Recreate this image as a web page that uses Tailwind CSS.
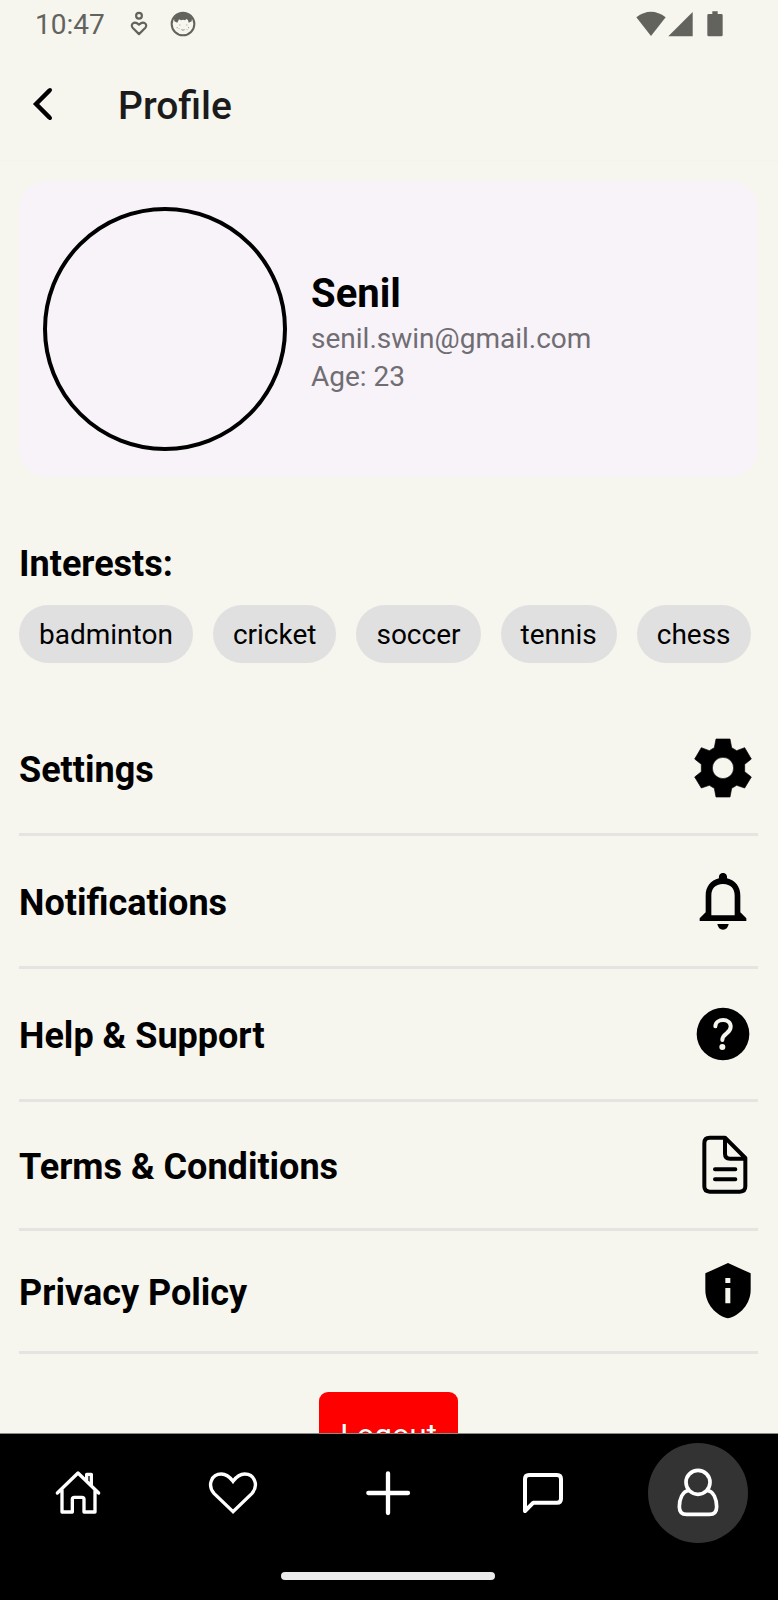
<!DOCTYPE html>
<html lang="en">
<head>
  <meta charset="UTF-8" />
  <meta name="viewport" content="width=device-width, initial-scale=1.0"/>
  <title>Profile</title>
  <script src="https://cdn.jsdelivr.net/npm/@tailwindcss/browser@4"></script>
</head>
<body class="h-screen flex flex-col overflow-hidden bg-[#f6f5ee] text-black font-['Roboto',sans-serif]">

  <!-- Status bar -->
  <div class="flex h-12 shrink-0 items-center justify-between pl-[35px] pr-[55px] text-[#63635e]">
    <div class="flex items-center">
      <span class="pt-0.5 text-[28px] leading-8">10:47</span>
      <svg class="ml-6 h-[26px] w-[20px]" viewBox="0 0 54 72" fill="none" stroke="currentColor" stroke-width="6">
        <circle cx="27" cy="13" r="8"/>
        <path d="M27 64 10 47C1 37 14 26 27 38 40 26 53 37 44 47Z" stroke-linejoin="round"/>
      </svg>
      <svg class="ml-[21px] h-[26px] w-[26px]" viewBox="0 0 78 78" fill="none">
        <circle cx="39" cy="39" r="34" stroke="currentColor" stroke-width="6"/>
        <path d="M12 22Q25 4 39 5 54 5 66 22L65 31 56 35 54 27 49 24 45 28 39 26 33 28 27 25 22 35 13 31Z" fill="currentColor"/>
        <path d="M28 42h3M49 42h3M20 50h3M26 53h2M54 50h3M50 56h2M34 56q5 3 10 0" stroke="currentColor" stroke-width="2"/>
      </svg>
    </div>
    <div class="flex items-center">
      <svg class="h-[26px] w-[30px]" viewBox="0 0 90 78" fill="currentColor"><path d="M1 19Q45-14 89 19L45 75Z"/></svg>
      <svg class="ml-0.5 h-[26px] w-[25px]" viewBox="0 0 75 78" fill="currentColor"><path d="M1 76 74 3V76Z"/></svg>
      <svg class="ml-[14px] h-[26px] w-4" viewBox="0 0 48 78" fill="currentColor"><path d="M16 1H32V9H43Q47 9 47 13V72Q47 76 43 76H5Q1 76 1 72V13Q1 9 5 9H16Z"/></svg>
    </div>
  </div>

  <!-- Header -->
  <header class="flex h-[113px] shrink-0 items-center border-b border-[#f4f3eb] pl-7">
    <button type="button" aria-label="Back" class="flex h-10 w-8 items-center justify-center">
      <svg class="h-9 w-6" viewBox="0 0 24 36" fill="none" stroke="currentColor" stroke-width="4" stroke-linecap="round"><path d="M18 4 4 18 18 32"/><path d="M17 5 4 18 17 31"/></svg>
    </button>
    <h1 class="ml-[58px] pt-1 text-[39px] font-medium leading-[48px] text-[#1b1b1b]">Profile</h1>
  </header>

  <main class="min-h-0 flex-1 overflow-y-auto pt-5 pr-5 pb-10 pl-[19px] [scrollbar-width:none]">

    <!-- User card -->
    <section class="flex items-center gap-6 rounded-[28px] bg-[#f7f3f9] px-6 py-[26px]">
      <div class="size-[244px] shrink-0 rounded-full border-4 border-black"></div>
      <div class="pt-[5px]">
        <h2 class="text-[40px] font-bold leading-[52px]">Senil</h2>
        <p class="text-[28px] leading-[38px] text-[#706d73]">senil.swin@gmail.com</p>
        <p class="text-[28px] leading-[38px] text-[#706d73]">Age: 23</p>
      </div>
    </section>

    <!-- Interests -->
    <h2 class="mt-[65px] text-[36px] font-bold leading-[44px]">Interests:</h2>
    <ul class="mt-[19px] flex gap-5 text-[28px] leading-[38px]">
      <li class="rounded-full bg-[#e0e0e0] px-5 pt-[11px] pb-[9px]">badminton</li>
      <li class="rounded-full bg-[#e0e0e0] px-5 pt-[11px] pb-[9px]">cricket</li>
      <li class="rounded-full bg-[#e0e0e0] px-5 pt-[11px] pb-[9px]">soccer</li>
      <li class="rounded-full bg-[#e0e0e0] px-5 pt-[11px] pb-[9px]">tennis</li>
      <li class="rounded-full bg-[#e0e0e0] px-5 pt-[11px] pb-[9px]">chess</li>
    </ul>

    <!-- Menu -->
    <nav class="mt-10 text-[36px] font-bold leading-[44px]">
      <a href="#" class="flex items-center justify-between border-b-3 border-[#e4e4e1] py-[30px]">
        <span class="pt-1">Settings</span>
        <span class="flex size-[70px] items-center justify-center">
          <svg class="size-[60px]" viewBox="0 0 180 180"><path fill-rule="evenodd" stroke="currentColor" stroke-width="2" stroke-linejoin="round" d="M69 3H111L116 29 131 38 155 29 175 63 155 79V101L175 117 155 150 131 142 116 151 111 177H69L64 151 49 142 25 150 5 117 25 101V79L5 63 25 29 49 38 64 29ZM90 58a32 32 0 1 0 0 64a32 32 0 1 0 0-64Z"/></svg>
        </span>
      </a>
      <a href="#" class="flex items-center justify-between border-b-3 border-[#e4e4e1] py-[30px]">
        <span class="pt-1">Notifications</span>
        <span class="flex size-[70px] items-center justify-center">
          <svg class="size-[60px]" viewBox="0 0 180 180"><path fill-rule="evenodd" d="M78 22C75 1 105 1 102 22 127 28 142 47 142 74V124L160 142V150H20V142L38 124V74C38 47 53 28 78 22ZM90 39C66 39 55 54 55 74V133H125V74C125 54 114 39 90 39Z"/><path d="M73 159H107Q104 176 90 176T73 159Z"/></svg>
        </span>
      </a>
      <a href="#" class="flex items-center justify-between border-b-3 border-[#e4e4e1] py-[30px]">
        <span class="pt-1">Help &amp; Support</span>
        <span class="flex size-[70px] items-center justify-center">
          <svg class="size-[60px]" viewBox="0 0 180 180"><circle cx="90" cy="90" r="79"/><path d="M67 67C68 41 114 42 113 68 113 90 88 88 88 108" fill="none" stroke="#f6f5ee" stroke-width="12" stroke-linecap="round"/><circle cx="88" cy="129" r="9" fill="#f6f5ee"/></svg>
        </span>
      </a>
      <a href="#" class="flex items-center justify-between border-b-3 border-[#e4e4e1] py-[30px]">
        <span class="pt-1">Terms &amp; Conditions</span>
        <span class="flex size-[66px] items-center justify-center">
          <svg class="size-[60px]" viewBox="0 0 180 180" fill="none" stroke="currentColor" stroke-width="12" stroke-linecap="round" stroke-linejoin="round"><path d="M28 24Q28 8 44 8H90L151 69V154Q151 170 135 170H44Q28 170 28 154ZM90 8V56Q90 71 105 71H151M60 103H121M60 133H121"/></svg>
        </span>
      </a>
      <a href="#" class="flex items-center justify-between border-b-3 border-[#e4e4e1] py-[30px]">
        <span class="pt-1">Privacy Policy</span>
        <span class="flex size-[60px] items-center justify-center">
          <svg class="size-[60px]" viewBox="0 0 180 180"><path fill-rule="evenodd" d="M90 6 158 37V86C158 129 126 163 90 172 54 163 22 129 22 86V37ZM82 51V66H97V51ZM82 81V127H97V81Z"/></svg>
        </span>
      </a>
    </nav>

    <div class="mt-[38px] flex justify-center">
      <button type="button" class="rounded-[9px] bg-[#ff0000] px-[21px] pt-[26px] pb-6 text-[31px] leading-9 text-white">Logout</button>
    </div>
  </main>

  <!-- Bottom navigation -->
  <footer class="shrink-0 border-t border-[#8a8a86] bg-black pr-0.5 text-white">
    <nav class="grid grid-cols-5 justify-items-center pt-[9px]">
      <a href="#" aria-label="Home" class="flex size-[100px] items-center justify-center">
        <svg class="size-[50px]" viewBox="0 0 150 150" fill="none" stroke="currentColor" stroke-width="10" stroke-linecap="round" stroke-linejoin="round"><path d="M13 75 75 15 137 75M27 66V132H58V94Q58 88 64 88H87Q93 88 93 94V132H126V66M101 36V19H115V52"/></svg>
      </a>
      <a href="#" aria-label="Likes" class="flex size-[100px] items-center justify-center">
        <svg class="size-[50px]" viewBox="0 0 150 150" fill="none" stroke="currentColor" stroke-width="10" stroke-linejoin="miter"><path d="M75 131 18 76C-3 51 11 18 40 18 58 18 67 29 75 40 83 29 92 18 110 18 139 18 153 51 132 76Z"/></svg>
      </a>
      <a href="#" aria-label="Add" class="flex size-[100px] items-center justify-center">
        <svg class="size-[50px]" viewBox="0 0 150 150" fill="none" stroke="currentColor" stroke-width="13" stroke-linecap="round"><path d="M75 16V135M16 75H135"/></svg>
      </a>
      <a href="#" aria-label="Messages" class="flex size-[100px] items-center justify-center">
        <svg class="size-[50px]" viewBox="0 0 150 150" fill="none" stroke="currentColor" stroke-width="12" stroke-linecap="round" stroke-linejoin="round"><path d="M21 129V33Q21 21 33 21H117Q129 21 129 33V92Q129 104 117 104H46Z"/></svg>
      </a>
      <a href="#" aria-label="Profile" class="flex size-[100px] items-center justify-center rounded-full bg-[#333333]">
        <svg class="size-[50px]" viewBox="0 0 150 150" fill="none" stroke="currentColor" stroke-width="11"><circle cx="75" cy="43" r="36"/><path d="M48 67C28 69 19 94 19 116Q19 139 41 139H109Q131 139 131 116C131 94 122 69 102 67"/></svg>
      </a>
    </nav>
    <div class="mx-auto mt-[29px] mb-5 h-2 w-[214px] rounded-full bg-[#ebebeb]"></div>
  </footer>
</body>
</html>
